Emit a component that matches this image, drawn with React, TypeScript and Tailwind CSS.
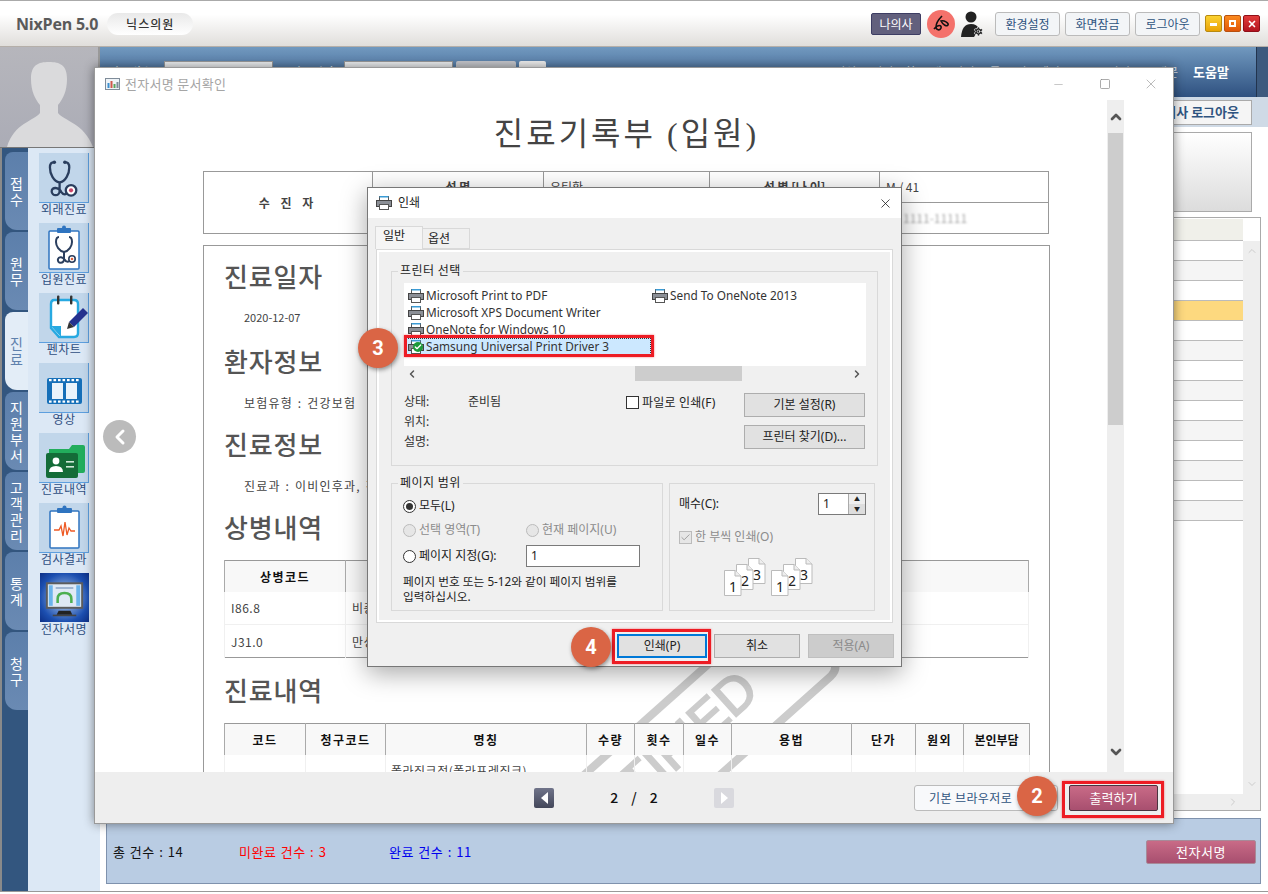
import React from 'react';
import { ChevronUp, ChevronDown, ChevronLeft, ChevronRight, Settings, Check, X, Minus, Square } from 'lucide-react';

const sideTabs = ['접수', '원무', '진료', '지원부서', '고객관리', '통계', '청구'];

function PrinterIcon({ className = '' }: { className?: string }) {
  return (
    <svg className={className} width="16" height="14" viewBox="0 0 16 14">
      <rect x="3.5" y="0.5" width="9" height="4" fill="#fff" stroke="#555" />
      <rect x="3.5" y="0" width="9" height="1.5" fill="#3a9bd5" />
      <rect x="0.5" y="4.5" width="15" height="6" fill="#8b8f96" stroke="#444" />
      <rect x="3.5" y="8.5" width="9" height="5" fill="#fff" stroke="#555" />
    </svg>
  );
}

function Stethoscope({ stroke = '#2a3e5e', dot = '#c9466a' }: { stroke?: string; dot?: string }) {
  return (
    <svg viewBox="0 0 50 50" className="w-full h-full" fill="none">
      <path d="M14 7C10 7 9 10 9 13C9 20 13 29 20 30C27 29 31 20 31 13C31 10 30 7 26 7" stroke={stroke} strokeWidth="2.6" strokeLinecap="round" />
      <circle cx="14" cy="7" r="2" fill={stroke} />
      <circle cx="26" cy="7" r="2" fill={stroke} />
      <path d="M20 30V40C20 46 11 46 11 40C11 35 19 35 22 41C24 44 26 44 28 43" stroke={stroke} strokeWidth="2.6" />
      <circle cx="33" cy="39" r="6" fill="#fff" stroke={stroke} strokeWidth="2.6" />
      <circle cx="33" cy="39" r="2.4" fill={dot} />
    </svg>
  );
}

function TileIcon({ kind }: { kind: number }) {
  if (kind === 0) return <div className="w-[50px] h-[50px] p-[3px]"><Stethoscope /></div>;
  if (kind === 1)
    return (
      <div className="relative w-[50px] h-[50px]">
        <svg viewBox="0 0 50 50" className="w-full h-full">
          <rect x="10" y="8" width="30" height="38" rx="1" fill="#fff" stroke="#2f74c0" strokeWidth="1.5" />
          <rect x="18" y="5" width="14" height="5" rx="1" fill="#2f74c0" />
          <circle cx="25" cy="4.5" r="2" fill="#2f74c0" />
          <path d="M20 14C17 14 17 17 17 19C17 23 20 28 25 29C30 28 33 23 33 19C33 17 33 14 30 14" fill="none" stroke="#2a3e5e" strokeWidth="2" />
          <path d="M25 29V36C25 41 18 41 19 36C20 33 24 34 26 37C27 39 29 39 30 38" fill="none" stroke="#2a3e5e" strokeWidth="2" />
          <circle cx="33" cy="36" r="3.2" fill="#fff" stroke="#2a3e5e" strokeWidth="1.6" />
          <circle cx="33" cy="36" r="1.3" fill="#e0603a" />
        </svg>
      </div>
    );
  if (kind === 2)
    return (
      <svg viewBox="0 0 50 50" className="w-[50px] h-[50px]">
        <path d="M15 7H35Q39 7 39 11V40Q39 44 35 44H20L12 35V11Q12 7 15 7Z" fill="#fff" stroke="#27a9e1" strokeWidth="2.4" />
        <path d="M12 33H22V44Z" fill="#27a9e1" />
        <rect x="18" y="2.5" width="2.4" height="9" rx="1" fill="#333" />
        <rect x="31" y="2.5" width="2.4" height="9" rx="1" fill="#333" />
        <path d="M30 29L44 15L49 20L35 34Z" fill="#24318f" />
        <path d="M30 29L35 34L28 36Z" fill="#333" />
      </svg>
    );
  if (kind === 3)
    return (
      <svg viewBox="0 0 50 50" className="w-[50px] h-[50px]">
        <rect x="8" y="15" width="35" height="26" rx="2" fill="#156fb8" />
        <rect x="13" y="20" width="11" height="16" fill="#e9f3fb" />
        <rect x="27" y="20" width="11" height="16" fill="#e9f3fb" />
        {[10, 14.5, 19, 23.5, 28, 32.5, 37].map(x => (
          <g key={x}>
            <rect x={x} y="16" width="2.6" height="2.2" fill="#fff" />
            <rect x={x} y="37.5" width="2.6" height="2.2" fill="#fff" />
          </g>
        ))}
      </svg>
    );
  if (kind === 4)
    return (
      <svg viewBox="0 0 50 50" className="w-[50px] h-[50px]">
        <path d="M10 16H30L33 12H44Q46 12 46 14V38Q46 40 44 40H10Z" fill="#22ad5c" />
        <rect x="7" y="20" width="32" height="25" rx="2" fill="#146c38" />
        <circle cx="17" cy="28" r="3.4" fill="#fff" />
        <path d="M10 39Q10 33 17 33Q24 33 24 39Z" fill="#fff" />
        <rect x="27" y="28" width="8" height="1.6" fill="#cfe8d8" />
        <rect x="27" y="33" width="8" height="1.6" fill="#cfe8d8" />
      </svg>
    );
  if (kind === 5)
    return (
      <svg viewBox="0 0 50 50" className="w-[50px] h-[50px]">
        <rect x="11" y="8" width="29" height="37" rx="1" fill="#fff" stroke="#2f74c0" strokeWidth="1.5" />
        <rect x="18" y="5" width="15" height="5" rx="1" fill="#2f74c0" />
        <circle cx="25.5" cy="4.5" r="2" fill="#2f74c0" />
        <path d="M15 27H20L22 23L24 33L26 19L28 32L30 25L32 28H36" fill="none" stroke="#ee5a24" strokeWidth="1.3" />
      </svg>
    );
  return (
    <div className="w-[49px] h-[49px] ml-px bg-[radial-gradient(circle,#a9c6ea_10%,#1c4fb0_70%,#0d2f86)] flex items-center justify-center">
      <svg viewBox="0 0 50 50" className="w-[50px] h-[50px]">
        <rect x="7" y="10" width="36" height="25" fill="#dfe9f5" stroke="#5c5c5c" strokeWidth="2" />
        <rect x="9" y="12" width="4" height="21" fill="#6bb4ec" />
        <rect x="37" y="12" width="4" height="21" fill="#6bb4ec" />
        <rect x="16" y="14" width="18" height="1.6" fill="#8fa8c8" />
        <path d="M18 30V26Q18 20 25 20Q32 20 32 26V30" fill="none" stroke="#4caf50" strokeWidth="2.6" />
        <path d="M19 38H31L33 42H17Z" fill="#222" />
        <rect x="13" y="42" width="24" height="1.6" fill="#444" />
      </svg>
    </div>
  );
}

function Callout({ n, className }: { n: number; className: string }) {
  return (
    <div className={`absolute w-[40px] h-[40px] rounded-full bg-[#da6545] text-white font-bold text-[20px] flex items-center justify-center shadow-[1px_2px_4px_rgba(0,0,0,0.4)] font-['Roboto',sans-serif] ${className}`}>
      {n}
    </div>
  );
}

function DocHeading({ children }: { children: React.ReactNode }) {
  return <h2 className="h-[42px] flex items-center pl-[20px] text-[26px] leading-none font-medium tracking-[0.8px] text-[#555]">{children}</h2>;
}

function DocLine({ children }: { children: React.ReactNode }) {
  return <p className="h-[41px] flex items-center pl-[40px] text-[12px] tracking-[1.2px] [word-spacing:1px] text-[#444]">{children}</p>;
}

function Radio({ on, disabled }: { on?: boolean; disabled?: boolean }) {
  return (
    <span className={`w-[13px] h-[13px] rounded-full border flex items-center justify-center shrink-0 ${disabled ? 'border-[#bbb] bg-[#e6e6e6]' : 'border-[#333] bg-white'}`}>
      {on && <span className="w-[7px] h-[7px] rounded-full bg-[#333]" />}
    </span>
  );
}

function DialogButton({ children, className = '' }: { children: React.ReactNode; className?: string }) {
  return <button className={`h-[24px] border border-[#adadad] bg-[#e1e1e1] text-[12px] text-[#222] flex items-center justify-center ${className}`}>{children}</button>;
}

function CollatePages() {
  const pages = [
    { x: 0, y: 12, t: '1' },
    { x: 12, y: 6, t: '2' },
    { x: 24, y: 0, t: '3' },
  ].reverse();
  return (
    <svg width="42" height="38" viewBox="0 0 42 38">
      {pages.map(p => (
        <g key={p.t} transform={`translate(${p.x},${p.y})`}>
          <path d="M0.5 0.5H11L17 6V25.5H0.5Z" fill="#fff" stroke="#bbb" />
          <path d="M11 0.5V6H17" fill="#eee" stroke="#bbb" />
          <text x="9" y="22" textAnchor="middle" fontSize="14" fill="#222" fontFamily="Noto Sans">{p.t}</text>
        </g>
      ))}
    </svg>
  );
}

function PrintDialog() {
  const leftPrinters = ['Microsoft Print to PDF', 'Microsoft XPS Document Writer', 'OneNote for Windows 10'];
  return (
    <div className="absolute left-[367px] top-[187px] w-[535px] h-[480px] border border-[#777] bg-[#f0f0f0] shadow-[0_6px_24px_rgba(0,0,0,0.35)] font-['Noto_Sans','Noto_Sans_CJK_KR',sans-serif] text-[12px] text-[#222]">
      <div className="h-[30px] bg-white flex items-center pl-[8px] pr-[8px]">
        <PrinterIcon />
        <span className="ml-[6px] text-[12px] text-[#222]">인쇄</span>
        <X className="ml-auto w-[15px] h-[15px] text-[#111]" strokeWidth={1.2} />
      </div>
      <div className="flex items-end h-[31px] pl-[7px]">
        <div className="w-[48px] h-[23px] bg-[#f5f5f5] border border-b-0 border-[#d9d9d9] pl-[7px] leading-[18px]">일반</div>
        <div className="w-[47px] h-[21px] border border-l-0 border-[#d9d9d9] pl-[5px] leading-[20px]">옵션</div>
      </div>
      <div className="ml-[8px] w-[517px] h-[374px] border border-[#d9d9d9] outline-2 outline-white -outline-offset-3 pt-[21px] pl-[14px]">
        <div className="relative w-[487px] h-[195px] border border-[#d9d9d9] pt-[11px] pl-[12px]">
          <span className="absolute left-[6px] -top-[8px] bg-[#f0f0f0] px-[2px] leading-[14px] tracking-[0.4px]">프린터 선택</span>
          <div className="w-[462px] h-[83px] bg-white pt-[4px] grid grid-cols-[248px_1fr] grid-rows-[17px_17px_17px_17px] text-[#333] text-[11.8px]">
            <div className="flex items-center pl-[4px] gap-[2px]"><PrinterIcon />{leftPrinters[0]}</div>
            <div className="flex items-center gap-[2px]"><PrinterIcon />Send To OneNote 2013</div>
            <div className="col-span-2 flex items-center pl-[4px] gap-[2px]"><PrinterIcon />{leftPrinters[1]}</div>
            <div className="col-span-2 flex items-center pl-[4px] gap-[2px]"><PrinterIcon />{leftPrinters[2]}</div>
            <div className="col-span-2 flex items-center">
              <div className="w-[247px] h-[17px] bg-[#cce8ff] border border-dotted border-[#333] flex items-center pl-[3px] gap-[2px] relative">
                <PrinterIcon />
                <span className="absolute left-[8px] top-[3px] w-[10px] h-[10px] rounded-full bg-[#1c9a3a] flex items-center justify-center">
                  <Check className="w-[8px] h-[8px] text-white" strokeWidth={4} />
                </span>
                Samsung Universal Print Driver 3
              </div>
            </div>
          </div>
          <div className="w-[462px] h-[15px] flex items-center relative">
            <ChevronLeft className="w-[12px] h-[12px] ml-[2px] text-[#555]" strokeWidth={3} />
            <div className="ml-[217px] w-[107px] h-[15px] bg-[#cdcdcd]" />
            <ChevronRight className="ml-auto w-[12px] h-[12px] mr-[3px] text-[#555]" strokeWidth={3} />
          </div>
          <div className="flex mt-[10px]">
            <div className="w-[222px] text-[#333] leading-[20px] pt-[1px]">
              <div className="flex"><span className="w-[64px]">상태:</span><span>준비됨</span></div>
              <div>위치:</div>
              <div>설명:</div>
            </div>
            <div className="w-[118px] pt-[4px] flex items-start">
              <span className="w-[13px] h-[13px] bg-white border border-[#333] shrink-0 mt-px" />
              <span className="ml-[3px] leading-[15px] tracking-[0.2px]">파일로 인쇄(F)</span>
            </div>
            <div className="flex flex-col gap-[8px] pt-[2px]">
              <DialogButton className="w-[121px]">기본 설정(R)</DialogButton>
              <DialogButton className="w-[121px]">프린터 찾기(D)...</DialogButton>
            </div>
          </div>
        </div>
        <div className="flex mt-[17px] gap-[6px]">
          <div className="relative w-[272px] h-[128px] border border-[#d9d9d9] pt-[14px] pl-[11px]">
            <span className="absolute left-[6px] -top-[8px] bg-[#f0f0f0] px-[2px] leading-[14px] tracking-[0.4px]">페이지 범위</span>
            <div className="flex items-center gap-[3px] h-[16px]"><Radio on />모두(L)</div>
            <div className="flex items-center h-[16px] mt-[8px] text-[#8c8c8c]">
              <div className="w-[123px] flex items-center gap-[3px]"><Radio disabled />선택 영역(T)</div>
              <div className="flex items-center gap-[3px]"><Radio disabled />현재 페이지(U)</div>
            </div>
            <div className="flex items-center h-[22px] mt-[7px]">
              <div className="w-[123px] flex items-center gap-[3px]"><Radio />페이지 지정(G):</div>
              <div className="w-[114px] h-[22px] bg-white border border-[#7a7a7a] pl-[4px] leading-[20px]">1</div>
            </div>
            <p className="mt-[7px] leading-[15px] text-[11.7px]">페이지 번호 또는 5-12와 같이 페이지 범위를<br />입력하십시오.</p>
          </div>
          <div className="w-[206px] h-[128px] border border-[#d9d9d9] pl-[9px] pt-[9px]">
            <div className="flex items-center h-[22px]">
              <span>매수(C):</span>
              <div className="ml-auto mr-[8px] w-[48px] h-[22px] bg-white border border-[#7a7a7a] flex">
                <span className="flex-1 pl-[4px] leading-[20px]">1</span>
                <div className="w-[17px] border-l border-[#aaa] flex flex-col">
                  <span className="flex-1 bg-[#eee] flex items-center justify-center text-[6px] leading-none">▲</span>
                  <span className="flex-1 bg-[#ddd] flex items-center justify-center text-[6px] leading-none">▼</span>
                </div>
              </div>
            </div>
            <div className="flex items-center mt-[14px] h-[16px] text-[#8c8c8c]">
              <span className="w-[13px] h-[13px] border border-[#bbb] bg-[#e6e6e6] flex items-center justify-center">
                <Check className="w-[11px] h-[11px] text-[#999]" strokeWidth={2} />
              </span>
              <span className="ml-[3px]">한 부씩 인쇄(O)</span>
            </div>
            <div className="flex gap-[5px] ml-[45px] mt-[13px]">
              <CollatePages />
              <CollatePages />
            </div>
          </div>
        </div>
      </div>
      <div className="flex justify-end mt-[11px] pr-[7px]">
        <DialogButton className="w-[90px] !border-2 !border-[#0078d7] mr-[7px]">인쇄(P)</DialogButton>
        <DialogButton className="w-[86px] mr-[8px]">취소</DialogButton>
        <DialogButton className="w-[86px] !bg-[#cccccc] !text-[#8a8a8a] !border-[#bfbfbf]">적용(A)</DialogButton>
      </div>
    </div>
  );
}

function DocWindow() {
  const th = 'border-x border-[#aaa] bg-[#f8f8f8] font-bold text-[12px] tracking-[1.5px] pt-[2px] text-[#111] text-center';
  const td = 'border-x border-[#f0f0f0] text-[12px] tracking-[0.5px] pt-[1px] text-[#444]';
  return (
    <div className="absolute left-[94px] top-[67px] w-[1080px] h-[757px] bg-white border border-[#999] shadow-[0_0_10px_rgba(0,0,0,0.45)] flex flex-col">
      <div className="h-[32px] shrink-0 flex items-center pl-[10px] text-[13px] tracking-[0.3px] text-[#a5a5a5]">
        <svg width="15" height="12" viewBox="0 0 15 12" className="mr-[5px]">
          <rect x="0.5" y="0.5" width="14" height="11" fill="#eef3f7" stroke="#7f8c99" />
          <rect x="2.5" y="5" width="2" height="5" fill="#3a8fd0" />
          <rect x="5.5" y="3" width="2" height="7" fill="#d0574a" />
          <rect x="8.5" y="6" width="2" height="4" fill="#58a55c" />
          <rect x="11.5" y="4" width="2" height="6" fill="#7f8c99" />
        </svg>
        전자서명 문서확인
        <Minus className="ml-auto w-[13px] h-[13px] text-[#999]" strokeWidth={1} />
        <Square className="ml-[34px] w-[12px] h-[12px] text-[#888]" strokeWidth={1.4} />
        <X className="ml-[32px] mr-[14px] w-[16px] h-[16px] text-[#999]" strokeWidth={1} />
      </div>
      <div className="flex-1 flex min-h-0">
        <div className="relative flex-1 overflow-hidden">
          {/* CERTIFIED stamp behind the document tables */}
          <svg className="absolute left-[386px] top-[540px]" width="420" height="140" viewBox="480 640 420 140">
            <path d="M583 775L740 635" fill="none" stroke="#ccc" strokeWidth="8" />
            <path d="M719 775L830 676Q838 668 831 660L825 652" fill="none" stroke="#ccc" strokeWidth="8" />
            <text transform="translate(760,694) rotate(-42)" textAnchor="end" fontSize="52" fontWeight="400" stroke="#ccc" strokeWidth="2" fill="#ccc" fontFamily="Liberation Sans">CERTIFIED</text>
          </svg>
          <div className="relative ml-[108px] w-[847px] font-['Liberation_Serif','Noto_Sans_CJK_KR',serif]">
            <h1 className="h-[71px] pb-[3px] flex items-center justify-center text-[32px] font-normal text-[#444] tracking-[3px]">
              진료기록부 (입원)
            </h1>
            <table className="w-[846px] table-fixed border-collapse border border-[#999] text-[12px] text-[#444] font-['Noto_Sans_CJK_KR',sans-serif]">
              <colgroup>
                <col className="w-[169px]" />
                <col className="w-[171px]" />
                <col className="w-[166px]" />
                <col className="w-[170px]" />
                <col />
              </colgroup>
              <tbody>
                <tr className="h-[31px]">
                  <td rowSpan={2} className="border border-[#999] text-center font-bold tracking-[4px]">수 진 자</td>
                  <td className="border border-[#999] text-center font-bold">성 명</td>
                  <td className="border border-[#999] pl-[6px]">유티환</td>
                  <td className="border border-[#999] text-center font-bold">성 별 [나 이]</td>
                  <td className="border border-[#999] pl-[6px]">M / 41</td>
                </tr>
                <tr className="h-[31px]">
                  <td className="border border-[#999] text-center font-bold">주민등록번호</td>
                  <td className="border border-[#999] pl-[6px]">서울</td>
                  <td className="border border-[#999] text-center font-bold">주민번호</td>
                  <td className="border border-[#999] pl-[23px]">
                    <span className="blur-[1px] text-[#aaa]">1111-11111</span>
                  </td>
                </tr>
              </tbody>
            </table>
            <section className="mt-[11px] border border-[#999] pt-[9px] font-['Noto_Sans_CJK_KR',sans-serif]">
              <DocHeading>진료일자</DocHeading>
              <p className="h-[43px] pb-[2px] flex items-center pl-[40px] text-[11px] text-[#444]">2020-12-07</p>
              <DocHeading>환자정보</DocHeading>
              <DocLine>보험유형 : 건강보험</DocLine>
              <DocHeading>진료정보</DocHeading>
              <DocLine>진료과 : 이비인후과, 진료의 : 김의사</DocLine>
              <DocHeading>상병내역</DocHeading>
              <table className="mt-[12px] ml-[20px] w-[805px] table-fixed border-collapse border border-[#999]">
                <colgroup>
                  <col className="w-[121px]" />
                  <col />
                </colgroup>
                <thead>
                  <tr className="h-[31px]">
                    <th className={th}>상병코드</th>
                    <th className={th}>상병명</th>
                  </tr>
                </thead>
                <tbody>
                  <tr className="h-[33px] border-b border-[#f0f0f0]">
                    <td className={`${td} pl-[6px]`}>I86.8</td>
                    <td className={`${td} pl-[6px]`}>비충혈</td>
                  </tr>
                  <tr className="h-[33px]">
                    <td className={`${td} pl-[6px]`}>J31.0</td>
                    <td className={`${td} pl-[6px]`}>만성비염</td>
                  </tr>
                </tbody>
              </table>
              <div className="mt-[11px]"><DocHeading>진료내역</DocHeading></div>
              <table className="mt-[12px] ml-[20px] w-[805px] table-fixed border-collapse border border-[#999]">
                <colgroup>
                  {['w-[81px]', 'w-[80px]', 'w-[201px]', 'w-[48px]', 'w-[49px]', 'w-[48px]', 'w-[120px]', 'w-[64px]', 'w-[48px]', 'w-[66px]'].map((w, i) => (
                    <col key={i} className={w} />
                  ))}
                </colgroup>
                <thead>
                  <tr className="h-[31px]">
                    {['코드', '청구코드', '명칭', '수량', '횟수', '일수', '용법', '단가', '원외'].map(t => (
                      <th key={t} className={th}>{t}</th>
                    ))}
                    <th className={`${th} !tracking-[0px]`}>본인부담</th>
                  </tr>
                </thead>
                <tbody>
                  <tr className="h-[33px]">
                    <td className={td} />
                    <td className={td} />
                    <td className={`${td} pl-[5px]`}>폴라징크정(폴라프레징크)</td>
                    <td className={td} />
                    <td className={td} />
                    <td className={td} />
                    <td className={td} />
                    <td className={td} />
                    <td className={td} />
                    <td className={td} />
                  </tr>
                </tbody>
              </table>
            </section>
          </div>
        </div>
        <div className="w-[17px] bg-[#eee] flex flex-col items-center shrink-0">
          <div className="h-[33px] flex items-center justify-center">
            <ChevronUp className="w-[16px] h-[16px] text-[#555]" strokeWidth={4} />
          </div>
          <div className="w-[15px] h-[292px] bg-[#cdcdcd]" />
          <ChevronDown className="mt-auto mb-[12px] w-[16px] h-[16px] text-[#555]" strokeWidth={4} />
        </div>
        <div className="w-[49px] shrink-0" />
      </div>
      <div className="h-[51px] shrink-0 bg-[#eee] flex items-center pl-[439px] pr-[15px] relative">
        <div className="w-[20px] h-[20px] rounded-[2px] bg-gradient-to-b from-[#70748a] to-[#43475a] flex items-center justify-center">
          <span className="w-0 h-0 border-y-[6px] border-y-transparent border-r-[7px] border-r-white" />
        </div>
        <div className="w-[160px] pl-[3px] text-center text-[14px] font-medium text-[#111] tracking-[3px] [word-spacing:4px]">2 / 2</div>
        <div className="w-[20px] h-[20px] rounded-[2px] bg-[#d9d9de] flex items-center justify-center">
          <span className="w-0 h-0 border-y-[6px] border-y-transparent border-l-[7px] border-l-white" />
        </div>
        <button className="ml-auto w-[144px] h-[26px] rounded-[3px] border border-[#bbb] bg-[#f8f9fb] text-[12px] text-[#2f5480] text-left pl-[14px] tracking-[0.4px]">기본 브라우저로</button>
        <button className="ml-[11px] w-[89px] h-[26px] rounded-[2px] border border-[#4a3440] bg-gradient-to-b from-[#c96b87] to-[#a84f6f] text-[13px] text-white">출력하기</button>
      </div>
    </div>
  );
}

export default function App() {
  return (
    <div className="relative w-[1268px] h-[894px] overflow-hidden bg-white font-['Noto_Sans_CJK_KR','Noto_Sans',sans-serif]">
      <div className="h-[47px] border-t border-b border-t-[#aaa] border-b-[#b5afa9] bg-gradient-to-b from-white from-30% to-[#e0dedb] flex items-center pl-[16px]">
        <span className="text-[16px] font-bold text-[#5a5a5a] tracking-[-0.2px] font-['Open_Sans',sans-serif]">NixPen 5.0</span>
        <span className="ml-[9px] w-[86px] h-[22px] rounded-full bg-gradient-to-b from-[#e9e9e9] to-white text-[12px] font-medium text-[#333] flex items-center justify-center tracking-[1px]">닉스의원</span>
        <div className="ml-auto flex items-center pr-[8px]">
          <span className="w-[50px] h-[22px] rounded-[2px] bg-[#62607d] border border-[#3d3d63] text-white text-[12px] flex items-center justify-center">나의사</span>
          <span className="ml-[6px] w-[28px] h-[28px] rounded-full bg-[#f4716b] flex items-center justify-center">
            <svg width="20" height="20" viewBox="0 0 20 20" fill="none" stroke="#111" strokeWidth="1.6">
              <path d="M11 2C9 4 5 9 5 13C5 16 9 17 10 14C11 11 7 10 3 15" />
              <path d="M10 7C13 6 18 9 17 11C16 13 12 11 10 7Z" />
            </svg>
          </span>
          <span className="relative ml-[5px] w-[24px] h-[26px]">
            <svg width="24" height="26" viewBox="0 0 24 26">
              <circle cx="11" cy="6" r="5.5" fill="#222" />
              <path d="M1 26Q2 13 11 13Q17 13 19 18L14 26Z" fill="#222" />
            </svg>
            <Settings className="absolute right-0 bottom-0 w-[11px] h-[11px] text-[#222]" fill="#222" stroke="#fff" strokeWidth={1.5} />
          </span>
          {['환경설정', '화면잠금', '로그아웃'].map((t, i) => (
            <button key={t} className={`${i === 0 ? 'ml-[11px]' : 'ml-[5px]'} w-[65px] h-[24px] rounded-[3px] border border-[#bbb] bg-[#f3f5f7] text-[12px] text-[#2f5480]`}>{t}</button>
          ))}
          <span className="ml-[5px] w-[17px] h-[17px] rounded-[2px] bg-gradient-to-b from-[#fbd230] to-[#e9a200] border border-[#b88a10] flex items-center justify-center">
            <span className="w-[7px] h-[3px] bg-white mt-[2px]" />
          </span>
          <span className="ml-[2px] w-[17px] h-[17px] rounded-[2px] bg-gradient-to-b from-[#fb8a1e] to-[#e0560a] border border-[#b8500f] flex items-center justify-center">
            <span className="w-[7px] h-[7px] border-2 border-white" />
          </span>
          <span className="ml-[2px] w-[17px] h-[17px] rounded-[2px] bg-gradient-to-b from-[#e23a3a] to-[#b3131f] border border-[#8f0f18] flex items-center justify-center">
            <X className="w-[10px] h-[10px] text-white" strokeWidth={4} />
          </span>
        </div>
      </div>

      <div className="flex h-[845px] border-b border-[#999]">
        <aside className="w-[100px] shrink-0 flex flex-col">
          <div className="h-[101px] bg-gradient-to-b from-[#b6b6bc] to-[#abacb6] border-b border-b-[#777] border-r-2 border-r-[#999] overflow-hidden">
            <svg width="98" height="100" viewBox="0 0 98 100">
              <path d="M49 15C38 15 31 18 31 32C31 44 35 52 40 58V66C34 74 14 76 7 100H93C84 76 64 74 58 66V58C63 52 67 44 67 32C67 18 60 15 49 15Z" fill="#dadadc" />
            </svg>
          </div>
          <div className="flex-1 flex border-l-2 border-l-[#8a8a8a] bg-[#dce8f5]">
            <div className="w-[26px] shrink-0 bg-[#33567f] pl-[3px] pt-[4px] flex flex-col gap-[2px]">
              {sideTabs.map((t, i) => (
                <div
                  key={t}
                  className={`w-[23px] h-[78px] rounded-tl-[8px] rounded-bl-[12px] flex flex-col items-center justify-center text-[14px] leading-[16px] ${i === 2 ? 'bg-[#e3edf7] text-[#5f81ad]' : 'bg-gradient-to-b from-[#5c7fab] to-[#6a8ab3] text-white'}`}
                >
                  {t.split('').map((c, j) => <span key={j}>{c}</span>)}
                </div>
              ))}
            </div>
            <div className="flex-1 pt-[5px] pl-[11px] flex flex-col">
              {['외래진료', '입원진료', '펜차트', '영상', '진료내역', '검사결과', '전자서명'].map((t, i) => (
                <div key={t} className="w-[50px] h-[70px] flex flex-col items-center">
                  <div className={`w-[50px] h-[50px] shrink-0 ${i === 6 ? '' : 'bg-[#c1d6ea] border-r border-b border-[#5d9fde]'}`}>
                    <TileIcon kind={i} />
                  </div>
                  <span className="text-[12px] leading-[12px] text-[#2f4f7f] whitespace-nowrap tracking-[0.5px]">{t}</span>
                </div>
              ))}
            </div>
          </div>
        </aside>

        <main className="flex-1 min-w-0 flex flex-col">
          <div className="h-[50px] shrink-0 bg-gradient-to-b from-[#7199bf] to-[#2f5180] flex items-center pl-[8px] text-[12px] text-[#dfe8f2]">
            <span className="w-[56px] font-medium">진료번호</span>
            <span className="w-[109px] h-[22px] bg-[#eceef0] border border-[#999]" />
            <span className="ml-[17px] w-[54px] font-medium">진료일자</span>
            <span className="w-[109px] h-[22px] bg-[#eceef0] border border-[#999]" />
            <span className="ml-[3px] w-[60px] h-[22px] rounded-[2px] bg-[#c4c6cb]" />
            <span className="ml-[3px] w-[27px] h-[22px] rounded-[2px] bg-[#eee] flex items-center justify-center">
              <span className="w-[9px] h-[9px] bg-[#445]" />
            </span>
            <nav className="ml-auto flex items-center gap-[15px] pr-[27px]">
              <span>서식</span>
              <span>병력조회</span>
              <span>재고관리</span>
              <span>톡</span>
              <span>업그레이드</span>
              <span>보고관리</span>
              <span>소개문</span>
              <span className="text-[13px] font-bold text-white">도움말</span>
            </nav>
            <span className="w-[12px] h-full shrink-0 bg-[#3d5a7e] border-l border-l-[#22344e]" />
          </div>
          <div className="h-[30px] shrink-0 bg-[#cfdae6] flex items-center justify-end pr-[16px]">
            <button className="w-[150px] h-[25px] border border-[#aaa] bg-[#f5f5f5] text-[13px] font-bold text-[#2f5480] text-right pr-[12px]">의사 로그아웃</button>
          </div>
          <div className="flex-1 min-h-0 pl-[6px] pr-[7px] pt-[5px] flex flex-col">
            <div className="h-[80px] mr-[9px] shrink-0 border border-[#aaa] bg-gradient-to-b from-white to-[#dcdcdc]" />
            <div className="mt-[5px] h-[594px] shrink-0 border border-[#aaa] flex flex-col bg-white">
              <div className="flex-1 min-h-0 flex">
                <div className="flex-1 pt-[1px]">
                  <div className="h-[22px] bg-[#f0f0ea] border-b border-[#bbb]" />
                  {Array.from({ length: 14 }, (_, i) => (
                    <div key={i} className={`h-[20px] border-b border-[#bbb] ${i === 3 ? 'bg-[#fdd97f]' : i % 2 ? 'bg-[#f5f5f5]' : 'bg-white'}`} />
                  ))}
                </div>
                <div className="w-[17px] shrink-0 flex flex-col">
                  <div className="h-[23px] bg-white" />
                  <div className="flex-1 bg-[#eee] flex flex-col items-center justify-between py-[4px]">
                    <ChevronUp className="w-[12px] h-[12px] text-[#ccc]" />
                    <ChevronDown className="w-[12px] h-[12px] text-[#ccc]" />
                  </div>
                </div>
              </div>
              <div className="h-[16px] shrink-0 bg-[#eee] flex items-center justify-end pr-[21px]">
                <ChevronRight className="w-[12px] h-[12px] text-[#ccc]" />
              </div>
            </div>
            <div className="mt-[7px] h-[66px] shrink-0 bg-[#b9cce3] border border-[#7f92ad] flex items-center pt-[2px] pl-[6px] pr-[4px] text-[13px] tracking-[0.5px] [word-spacing:1px]">
              <span className="w-[126px] text-[#111]">총 건수 : 14</span>
              <span className="w-[150px] text-[#ff0000]">미완료 건수 : 3</span>
              <span className="text-[#0000ee]">완료 건수 : 11</span>
              <button className="ml-auto w-[110px] h-[24px] rounded-[2px] border border-[#a78a98] bg-gradient-to-b from-[#c96b87] to-[#a84f6f] text-white text-[13px]">전자서명</button>
            </div>
          </div>
        </main>
      </div>

      <DocWindow />
      <div className="absolute left-[103px] top-[420px] w-[33px] h-[33px] rounded-full bg-[#bbb] flex items-center justify-center">
        <ChevronLeft className="w-[24px] h-[24px] text-white" strokeWidth={3} />
      </div>
      <PrintDialog />

      <div className="absolute left-[404px] top-[335px] w-[250px] h-[22px] border-[3px] border-[#ed1c24] shadow-[0_0_2px_rgba(237,28,36,0.6)]" />
      <div className="absolute left-[612px] top-[629px] w-[99px] h-[35px] border-[3px] border-[#ed1c24] shadow-[0_0_2px_rgba(237,28,36,0.6)]" />
      <div className="absolute left-[1062px] top-[781px] w-[102px] h-[37px] border-[3px] border-[#ed1c24] shadow-[0_0_2px_rgba(237,28,36,0.6)]" />
      <Callout n={3} className="left-[358px] top-[328px]" />
      <Callout n={4} className="left-[571px] top-[627px]" />
      <Callout n={2} className="left-[1017px] top-[776px]" />
    </div>
  );
}
